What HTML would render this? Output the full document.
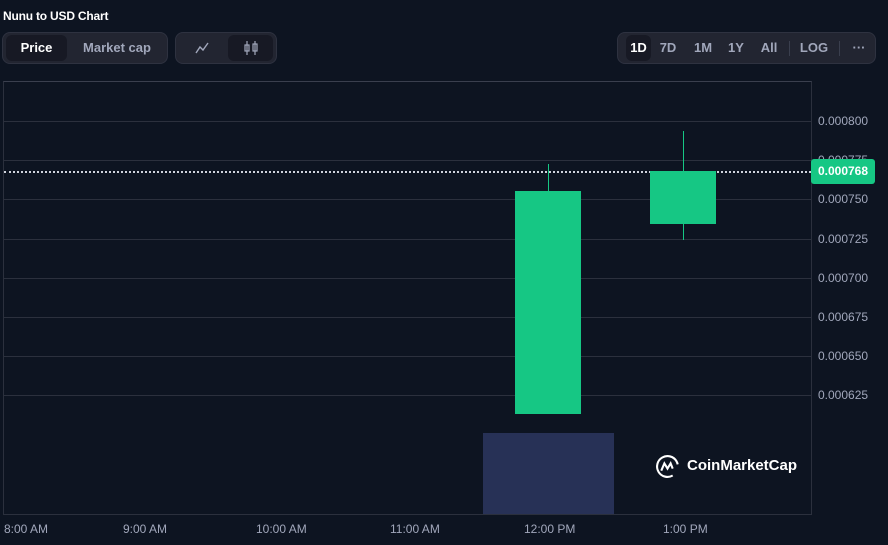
<!DOCTYPE html>
<html><head><style>
body{margin:0;width:888px;height:545px;background:#0d1421;font-family:"Liberation Sans",sans-serif;position:relative;overflow:hidden;color:#fff}
.a{position:absolute}
.grp{background:#222531;border-radius:8px;border:1px solid #2e3240}
.btn{position:absolute;font-size:13px;font-weight:bold;color:#a1a7bb;top:0;line-height:30px;text-align:center}
.sel{background:#171924;border-radius:6px;color:#fff}
.g{position:absolute;left:4px;width:807px;height:1px;background:#2b303d}
.yl{position:absolute;left:818px;font-size:12px;color:#a1a7bb}
.xl{position:absolute;top:522px;font-size:12px;color:#a1a7bb}
</style></head><body>
<div class="a" style="left:3px;top:9px;font-size:12px;font-weight:bold;letter-spacing:-0.2px">Nunu to USD Chart</div>
<div class="a grp" style="left:2px;top:32px;width:164px;height:30px">
 <div class="btn sel" style="left:3px;top:2px;width:61px;height:26px;line-height:26px">Price</div>
 <div class="btn" style="left:68px;width:92px">Market cap</div>
</div>
<div class="a grp" style="left:175px;top:32px;width:100px;height:30px">
 <svg class="a" style="left:19px;top:9px" width="14" height="12"><path d="M1 11 L5 5 L8 8 L13 1" stroke="#a1a7bb" stroke-width="1.4" fill="none"/></svg>
 <div class="a sel" style="left:52px;top:2px;width:45px;height:26px"></div>
 <svg class="a" style="left:68px;top:8px" width="14" height="14"><path d="M3 0V14M11 0V14" stroke="#a1a7bb" stroke-width="1.2"/><rect x="1" y="4" width="4" height="6" fill="none" stroke="#a1a7bb" stroke-width="1.2"/><rect x="9" y="3" width="4" height="7" fill="none" stroke="#a1a7bb" stroke-width="1.2"/></svg>
</div>
<div class="a grp" style="left:617px;top:32px;width:257px;height:30px">
 <div class="btn sel" style="left:8px;top:2px;width:25px;height:26px;line-height:26px">1D</div>
 <div class="btn" style="left:36px;width:28px">7D</div>
 <div class="btn" style="left:71px;width:28px">1M</div>
 <div class="btn" style="left:105px;width:26px">1Y</div>
 <div class="btn" style="left:138px;width:26px">All</div>
 <div class="a" style="left:171px;top:8px;width:1px;height:15px;background:#3a3f4e"></div>
 <div class="btn" style="left:180px;width:32px">LOG</div>
 <div class="a" style="left:221px;top:8px;width:1px;height:15px;background:#3a3f4e"></div>
 <div class="btn" style="left:230px;width:22px">···</div>
</div>
<div class="a" style="left:3px;top:81px;width:807px;height:432px;border:1px solid #2b303d;border-top-color:#3a3f4e"></div>
<div class="g" style="top:121px"></div><div class="g" style="top:160px"></div><div class="g" style="top:199px"></div><div class="g" style="top:239px"></div><div class="g" style="top:278px"></div><div class="g" style="top:317px"></div><div class="g" style="top:356px"></div><div class="g" style="top:395px"></div>
<div class="yl" style="top:114px">0.000800</div>
<div class="yl" style="top:153px">0.000775</div>
<div class="yl" style="top:192px">0.000750</div>
<div class="yl" style="top:232px">0.000725</div>
<div class="yl" style="top:271px">0.000700</div>
<div class="yl" style="top:310px">0.000675</div>
<div class="yl" style="top:349px">0.000650</div>
<div class="yl" style="top:388px">0.000625</div>
<div class="a" style="left:483px;top:433px;width:131px;height:81px;background:#273156"></div>
<div class="a" style="left:4px;top:171px;width:807px;border-top:2px dotted #cfd3dc"></div>
<div class="a" style="left:548px;top:164px;width:1px;height:28px;background:#16c784"></div>
<div class="a" style="left:515px;top:191px;width:66px;height:223px;background:#16c784"></div>
<div class="a" style="left:683px;top:131px;width:1px;height:109px;background:#16c784"></div>
<div class="a" style="left:650px;top:171px;width:66px;height:53px;background:#16c784"></div>
<div class="a" style="left:811px;top:159px;width:64px;height:25px;background:#16c784;border-radius:3px;font-size:12px;font-weight:bold;line-height:25px;text-align:center">0.000768</div>
<svg class="a" style="left:655px;top:454px" width="25" height="25" viewBox="0 0 24 24"><circle cx="12" cy="12" r="10" fill="none" stroke="#fff" stroke-width="2" stroke-dasharray="50 13" transform="rotate(60 12 12)"/><path d="M6 16 L9 9 L12 14 L15 9 L17 14" fill="none" stroke="#fff" stroke-width="2"/></svg>
<div class="a" style="left:687px;top:457px;font-size:15px;font-weight:bold">CoinMarketCap</div>
<div class="xl" style="left:4px">8:00 AM</div>
<div class="xl" style="left:123px">9:00 AM</div>
<div class="xl" style="left:256px">10:00 AM</div>
<div class="xl" style="left:390px">11:00 AM</div>
<div class="xl" style="left:524px">12:00 PM</div>
<div class="xl" style="left:663px">1:00 PM</div>
</body></html>
